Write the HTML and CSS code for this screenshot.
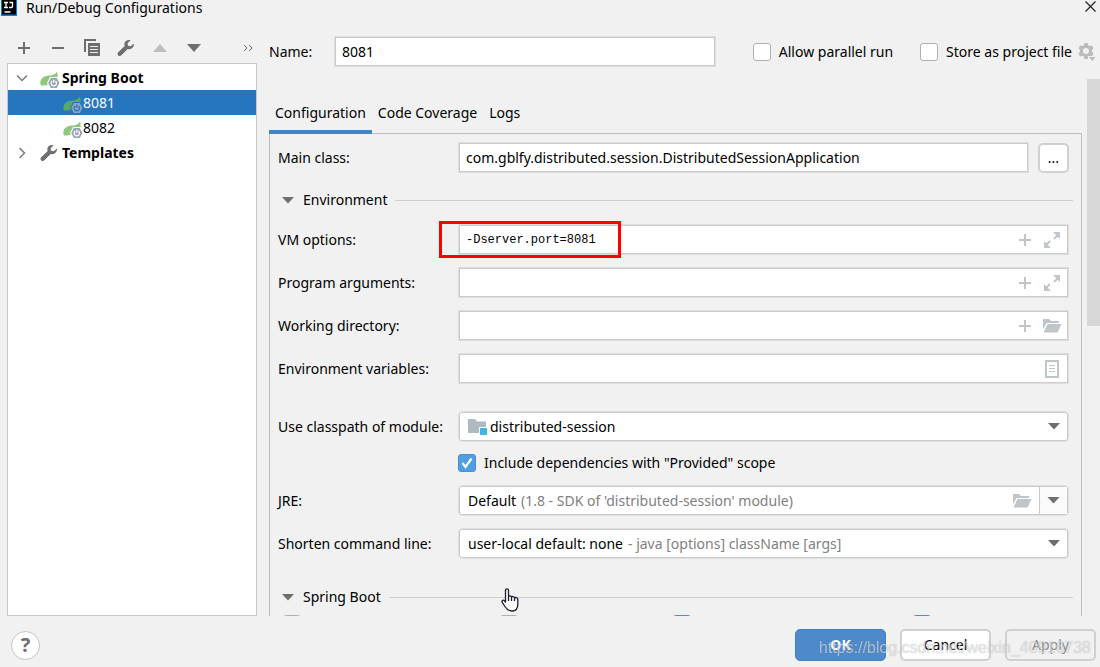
FILE: index.html
```html
<!DOCTYPE html>
<html lang="en">
<head>
    <meta charset="UTF-8">
    <meta name="viewport" content="width=device-width, initial-scale=1.0">
    <title>Run/Debug Configurations</title>
    <link rel="stylesheet" href="styles.css">
</head>
<body>
<!-- shared icons -->
<svg class="symbols" aria-hidden="true">
    <symbol id="wrench" viewBox="0 0 18 18">
        <path d="M17 4.6 13.7 7.2 11 6.7 10.6 4.2 13.6 1.2C11 .4 8.6 1.400 7.700 3.500 7.200 4.700 7.300 5.900 7.700 7L1.200 13.200C.3 14.100.3 15.500 1.200 16.400 2.100 17.300 3.500 17.200 4.400 16.300L10.700 9.900C13.800 11 17.400 8.500 17 4.600Z"/>
    </symbol>
    <symbol id="spring" viewBox="0 0 20 22">
        <path class="leaf" d="M17 4.500C18 8.500 18 12.500 15 14.500 11 17 6 19 1 18.500-.5 15.500.5 12 3.500 10 8 7.500 14 10 17 4.500Z"/>
        <path class="hex-edge" d="M10 10h7.500l3 6-3 6H10l-3-6Z"/>
        <path class="hex" d="M10.800 11h6l2.600 5-2.600 5h-6l-2.600-5Z"/>
        <path class="power" d="M12.200 14a2.700 2.700 0 1 0 3.200 0M13.800 12.700v3.300"/>
    </symbol>
    <symbol id="plus" viewBox="0 0 14 14">
        <path d="M6 1h2v5h5v2H8v5H6V8H1V6h5Z"/>
    </symbol>
    <symbol id="expand" viewBox="0 0 16 16">
        <path d="M9 0h7v7l-2.300-2.300-3 3-1.400-1.400 3-3ZM0 9l2.300 2.300 3-3 1.400 1.400-3 3L7 16H0Z"/>
    </symbol>
    <symbol id="folder" viewBox="0 0 20 15">
        <path d="M1 1h6l2 2h8v2H4.500L1 11.500ZM5.500 6H19.500L15.500 14.500H1.500Z"/>
    </symbol>
    <symbol id="down" viewBox="0 0 12 7">
        <path d="M0 0h12L6 6.500Z"/>
    </symbol>
</svg>

<div class="dialog">
    <header class="titlebar">
        <svg class="logo" width="16" height="16" viewBox="0 0 16 16">
            <path fill="#087cfa" d="M0 0h16v16H0Z"/>
            <path fill="#000" d="M1 0h14v14.500H1Z"/>
            <path fill="none" stroke="#fff" stroke-width="1.300" d="M3 2.500h4M5 2.500v5M3 7.500h4M8.500 2.500h3V6.500q0 1-1 1H8M3.500 12h6"/>
        </svg>
        <span class="title">Run/Debug Configurations</span>
        <button class="close" aria-label="Close">
            <svg width="11" height="11" viewBox="0 0 11 11"><path fill="none" stroke="#222" stroke-width="1.200" d="M.5.500l10 10M10.500.500l-10 10"/></svg>
        </button>
    </header>

    <div class="body">
        <aside class="sidebar">
            <div class="toolbar">
                <button aria-label="Add"><svg width="14" height="14"><use href="#plus"/></svg></button>
                <button aria-label="Remove"><svg width="14" height="14"><path d="M1 6h12v2H1Z"/></svg></button>
                <button aria-label="Copy">
                    <svg width="16" height="17" viewBox="0 0 16 17"><path fill-rule="evenodd" d="M0 0h12v2H2v11H0ZM4 4h12v13H4ZM6 7v1h8V7ZM6 10v1h8v-1ZM6 13v1h8v-1Z"/></svg>
                </button>
                <button aria-label="Edit templates"><svg width="18" height="18"><use href="#wrench"/></svg></button>
                <button aria-label="Move up" disabled><svg width="14" height="8"><path d="M0 8 7 0l7 8Z"/></svg></button>
                <button aria-label="Move down"><svg width="14" height="8"><path d="M0 0h14L7 8Z"/></svg></button>
                <button class="more" aria-label="More">
                    <svg width="10" height="8" viewBox="0 0 10 8"><path d="m1 1 3 3-3 3M6 1l3 3-3 3"/></svg>
                </button>
            </div>
            <ul class="tree">
                <li class="group">
                    <svg class="chevron" width="12" height="12" viewBox="0 0 12 12"><path d="m1 3.500 5 5 5-5"/></svg>
                    <svg class="spring" width="20" height="22"><use href="#spring"/></svg>
                    Spring Boot
                </li>
                <li class="leaf-row selected"><svg class="spring" width="20" height="22"><use href="#spring"/></svg>8081</li>
                <li class="leaf-row"><svg class="spring" width="20" height="22"><use href="#spring"/></svg>8082</li>
                <li class="group">
                    <svg class="chevron" width="12" height="12" viewBox="0 0 12 12"><path d="m3.500 1 5 5-5 5"/></svg>
                    <svg class="wrench" width="18" height="18"><use href="#wrench"/></svg>
                    Templates
                </li>
            </ul>
        </aside>

        <main class="main">
            <div class="name-row">
                <label class="name-label" for="name">Name:</label>
                <input class="field name" type="text" id="name" value="8081">
                <label class="check"><input type="checkbox">Allow parallel run</label>
                <label class="check"><input type="checkbox">Store as project file</label>
                <button class="gear" aria-label="Storage settings">
                    <svg width="18" height="18" viewBox="0 0 18 18">
                        <path fill-rule="evenodd" d="M6.300 0h3.400l.5 2.300 1.500.8 2.200-.7 1.700 2.900L14 7v2l1.600 1.600-1.700 2.900-2.200-.7-1.500.8-.5 2.300H6.300l-.5-2.300-1.500-.8-2.200.7-1.700-2.900L2 9V7L.4 5.300l1.700-2.900 2.200.7 1.500-.8ZM8 5a3 3 0 1 0 0 6 3 3 0 0 0 0-6Z"/>
                        <path stroke="#f1f1f1" d="M10 13.500h8.500L14.300 18.500Z"/>
                    </svg>
                </button>
            </div>

            <div class="content">
                <div class="pane">
                    <div class="tabs" role="tablist">
                        <button class="tab active" role="tab" aria-selected="true">Configuration</button>
                        <button class="tab" role="tab">Code Coverage</button>
                        <button class="tab" role="tab">Logs</button>
                    </div>
                    <form class="panel">
                        <div class="row">
                            <label for="main-class">Main class:</label>
                            <input class="field" type="text" id="main-class" value="com.gblfy.distributed.session.DistributedSessionApplication">
                            <button class="browse" type="button">...</button>
                        </div>

                        <div class="section">
                            <svg width="12" height="7"><use href="#down"/></svg>
                            <span>Environment</span>
                        </div>

                        <div class="row">
                            <label for="vm-options">VM options:</label>
                            <div class="field vm">
                                <input class="mono" type="text" id="vm-options" value="-Dserver.port=8081">
                                <button type="button" aria-label="Insert macro"><svg width="14" height="14"><use href="#plus"/></svg></button>
                                <button type="button" aria-label="Expand"><svg width="16" height="16"><use href="#expand"/></svg></button>
                            </div>
                        </div>
                        <div class="row">
                            <label for="program-args">Program arguments:</label>
                            <div class="field">
                                <input type="text" id="program-args">
                                <button type="button" aria-label="Insert macro"><svg width="14" height="14"><use href="#plus"/></svg></button>
                                <button type="button" aria-label="Expand"><svg width="16" height="16"><use href="#expand"/></svg></button>
                            </div>
                        </div>
                        <div class="row">
                            <label for="work-dir">Working directory:</label>
                            <div class="field">
                                <input type="text" id="work-dir">
                                <button type="button" aria-label="Insert macro"><svg width="14" height="14"><use href="#plus"/></svg></button>
                                <button type="button" aria-label="Browse"><svg width="20" height="15"><use href="#folder"/></svg></button>
                            </div>
                        </div>
                        <div class="row">
                            <label for="env-vars">Environment variables:</label>
                            <div class="field">
                                <input type="text" id="env-vars">
                                <button type="button" aria-label="Edit variables">
                                    <svg width="14" height="18" viewBox="0 0 14 18"><path fill-rule="evenodd" d="M0 0h14v18H0ZM2 2v14h10V2ZM4 5h6v1H4ZM4 8h6v1H4ZM4 11h6v1H4Z"/></svg>
                                </button>
                            </div>
                        </div>

                        <div class="row module-row">
                            <label for="module">Use classpath of module:</label>
                            <div class="field combo">
                                <svg class="module" width="20" height="18" viewBox="0 0 20 18">
                                    <path fill="#afb9c0" d="M0 1h7l2 2.500h9V9h-7v6H0Z"/>
                                    <path fill="#40b6e0" d="M12 10h7v7h-7Z"/>
                                </svg>
                                <select id="module"><option>distributed-session</option></select>
                                <svg class="arrow" width="12" height="7"><use href="#down"/></svg>
                            </div>
                        </div>
                        <div class="row check-row">
                            <label class="check"><input type="checkbox" checked>Include dependencies with "Provided" scope</label>
                        </div>
                        <div class="row">
                            <label for="jre">JRE:</label>
                            <div class="field combo split">
                                <select id="jre"><option>Default</option></select>
                                <span class="hint">(1.8 - SDK of 'distributed-session' module)</span>
                                <button type="button" aria-label="Browse"><svg width="20" height="15"><use href="#folder"/></svg></button>
                                <svg class="arrow" width="12" height="7"><use href="#down"/></svg>
                            </div>
                        </div>
                        <div class="row">
                            <label for="shorten">Shorten command line:</label>
                            <div class="field combo">
                                <select id="shorten"><option>user-local default: none</option></select>
                                <span class="hint">- java [options] className [args]</span>
                                <svg class="arrow" width="12" height="7"><use href="#down"/></svg>
                            </div>
                        </div>

                        <div class="section spring-section">
                            <svg width="12" height="7"><use href="#down"/></svg>
                            <span>Spring Boot</span>
                        </div>
                        <div class="flags">
                            <input type="checkbox" aria-label="Enable debug output">
                            <input type="checkbox" aria-label="Hide banner">
                            <input type="checkbox" aria-label="Enable launch optimization" checked>
                            <input type="checkbox" aria-label="Enable JMX agent" checked>
                        </div>
                    </form>
                </div>
                <div class="scrollbar"><div class="thumb"></div></div>
            </div>
        </main>
    </div>

    <footer class="footer">
        <button class="help" aria-label="Help">?</button>
        <button class="btn primary">OK</button>
        <button class="btn">Cancel</button>
        <button class="btn" disabled>Apply</button>
        <span class="watermark">https://blog.csdn.net/weixin_40916738</span>
    </footer>

    <svg class="cursor" width="18" height="24" viewBox="0 0 18 24">
        <path fill="#fff" stroke="#1c1c2c" stroke-width="1.300" stroke-linejoin="round" d="M4.500 14V2.500C4.500.3 7.500.3 7.500 2.500V9C7.500 7.500 10.300 7.500 10.500 9.300 11 8 13.500 8.300 13.500 10 14.500 9 16.800 9.500 16.800 11.500V16C16.800 20 15 23 11 23 7 23 5.500 21 4 18.500L1.500 14.800C.2 12.800 2 11.300 3.500 12.800ZM7.500 9v4M10.500 9.300V13M13.500 10v3"/>
    </svg>
</div>
</body>
</html>
```
FILE: styles.css
```css
* {
    box-sizing: border-box;
}
body {
    font-family: "Noto Sans", "Open Sans", sans-serif;
    font-size: 14px;
    line-height: 20px;
    margin: 0;
    color: #000;
    background-color: #f1f1f1;
}
button, input, select {
    font: inherit;
    color: inherit;
    margin: 0;
    padding: 0;
    border: none;
    background: none;
}
svg {
    flex: none;
}
.symbols {
    position: absolute;
    width: 0;
    height: 0;
}
.dialog {
    display: flex;
    flex-direction: column;
    height: 100vh;
    overflow: hidden;
    position: relative;
}

/* title */
.titlebar {
    display: flex;
    align-items: center;
    height: 16px;
    line-height: 16px;
    padding: 0 4px 0 1px;
}
.title {
    flex: 1;
    margin-left: 9px;
}
.close {
    display: flex;
    margin-bottom: 4px;
}

.body {
    flex: 1;
    display: flex;
    gap: 12px;
    min-height: 0;
    padding-left: 7px;
}

/* left side */
.sidebar {
    width: 250px;
    display: flex;
    flex-direction: column;
    padding-top: 16px;
}
.toolbar {
    display: flex;
    height: 31px;
}
.toolbar button {
    width: 34px;
    display: flex;
    align-items: center;
    justify-content: center;
    fill: #6e6e6e;
}
.toolbar button:disabled {
    fill: #bdbdbd;
}
.toolbar .more {
    width: 18px;
    margin-left: auto;
    fill: none;
    stroke: #6e6e6e;
}
.tree {
    flex: 1;
    list-style: none;
    margin: 0;
    padding: 1px 0 0;
    background: #fff;
    border: 1px solid #c9c9c9;
}
.tree li {
    display: flex;
    align-items: center;
    height: 25px;
}
.group {
    font-weight: bold;
    padding-left: 8px;
}
.group .chevron {
    margin-right: 12px;
    fill: none;
    stroke: #7a7a7a;
    stroke-width: 1.5;
}
.group .wrench {
    margin-right: 4px;
    fill: #6e6e6e;
}
.group .spring {
    margin-right: 2px;
}
.leaf-row {
    padding-left: 55px;
}
.selected {
    color: #fff;
    background: #2675bf;
}
.spring {
    --leaf: #8cc97b;
    --hex: #9aa7b0;
    --bg: #fff;
}
.selected .spring {
    --leaf: #57a869;
    --hex: #8ba5be;
    --bg: #2675bf;
}
.leaf {
    fill: var(--leaf);
}
.hex {
    fill: var(--hex);
}
.hex-edge {
    fill: var(--bg);
}
.power {
    fill: none;
    stroke: var(--bg);
    stroke-width: 1.2;
}

/* right side */
.main {
    flex: 1;
    min-width: 0;
    display: flex;
    flex-direction: column;
    padding-top: 20px;
}
.name-row {
    display: flex;
    align-items: center;
    padding-right: 4px;
}
.name-label {
    width: 65px;
}
.field {
    flex: 1;
    min-width: 0;
    height: 31px;
    padding: 0 7px;
    background: #fff;
    border: 1px solid #dedede;
    box-shadow: inset 0 0 0 1px #cbcbcb;
}
.name {
    margin-right: 10px;
}
.check {
    display: flex;
    align-items: center;
    gap: 8px;
}
.name-row .check {
    margin-left: 27px;
}
input[type="checkbox"] {
    appearance: none;
    flex: none;
    width: 18px;
    height: 18px;
    background: #fff;
    border: 1px solid #b0b0b0;
    border-radius: 3px;
}
input[type="checkbox"]:checked {
    background: #4f9ee3 url("data:image/svg+xml,%3Csvg xmlns='http://www.w3.org/2000/svg' viewBox='0 0 16 16'%3E%3Cpath fill='none' stroke='white' stroke-width='2.200' d='m3.500 8 3 4 6-8.500'/%3E%3C/svg%3E");
    border-color: #4a8fd0;
}
.gear {
    display: flex;
    margin-left: 6px;
    fill: #bbb;
}

.content {
    flex: 1;
    display: flex;
    gap: 5px;
    min-height: 0;
    margin-top: 12px;
}
.pane {
    flex: 1;
    min-width: 0;
    display: flex;
    flex-direction: column;
}
.tabs {
    display: flex;
    align-items: flex-end;
    height: 54px;
}
.tab {
    position: relative;
    padding: 7px 6px;
    margin-bottom: -1px;
    border-bottom: 4px solid transparent;
}
.tab.active {
    border-color: #4083c9;
}
.panel {
    flex: 1;
    min-height: 0;
    overflow: hidden;
    padding: 8px 12px 0 8px;
    border: 1px solid #bfbfbf;
    border-bottom: none;
}
.scrollbar {
    width: 13px;
}
.thumb {
    height: 46%;
    background: #d7d7d7;
}

.row {
    display: flex;
    align-items: center;
    margin-bottom: 12px;
}
.row > label:first-child:not(.check) {
    width: 180px;
}
.module-row {
    margin-top: 27px;
}
.check-row {
    height: 18px;
    margin-bottom: 13px;
    padding-left: 180px;
}
.browse {
    width: 31px;
    height: 30px;
    margin-left: 9px;
    background: #fff;
    border: 2px solid #d0d0d0;
    border-radius: 5px;
}
div.field {
    display: flex;
    align-items: center;
    padding-right: 2px;
}
.field input {
    flex: 1;
    min-width: 0;
}
.field button {
    width: 26px;
    display: flex;
    justify-content: center;
    margin-right: 1px;
    fill: #bfc5c9;
}
.field .mono {
    font-family: "Liberation Mono", monospace;
    font-size: 12px;
}
input:focus, select:focus {
    outline: none;
}
/* highlighted part of the vm options */
.vm {
    position: relative;
}
.vm::before {
    content: "";
    position: absolute;
    box-sizing: border-box;
    left: -20px;
    top: -4px;
    width: 182px;
    height: 37px;
    border: 3px solid #f00;
    pointer-events: none;
}
div.combo {
    padding-left: 9px;
    border-radius: 4px;
}
.combo select {
    appearance: none;
}
.combo .arrow {
    margin-left: auto;
    margin-right: 6px;
    fill: #6e6e6e;
}
.combo .module {
    margin-right: 2px;
}
.hint {
    color: #808080;
    margin-left: 4px;
}
.split button {
    margin-left: auto;
    margin-right: 4px;
}
.split .arrow {
    margin: 0 -1px 0 0;
    padding: 10px 7px;
    width: 28px;
    height: 27px;
    border-left: 1px solid #c9c9c9;
    background: #fafafa;
}

.section {
    display: flex;
    align-items: center;
    height: 26px;
    margin: 14px 0 11px;
    padding-left: 4px;
    fill: #6e6e6e;
}
.section span {
    margin-left: 9px;
}
.section::after {
    content: "";
    flex: 1;
    height: 1px;
    margin-left: 8px;
    margin-right: -4px;
    background: #d0d0d0;
}
.spring-section {
    margin: 25px 0 5px;
}
.flags {
    display: grid;
    grid-template-columns: 218fr 174fr 242fr 157fr;
    padding-left: 5px;
}

/* buttons */
.footer {
    display: flex;
    align-items: center;
    gap: 14px;
    height: 51px;
    padding: 7px 4px 0 11px;
    position: relative;
}
.help {
    width: 29px;
    height: 29px;
    margin-right: auto;
    font-size: 20px;
    font-weight: bold;
    color: #6e6e6e;
    background: #fff;
    border: 1px solid #c4c4c4;
    border-radius: 50%;
}
.btn {
    width: 91px;
    height: 32px;
    background: #fff;
    border: 2px solid #d0d0d0;
    border-radius: 5px;
}
.btn.primary {
    color: #fff;
    font-weight: bold;
    background: #4e8ac9;
    border: 1px solid #4481c0;
}
.btn:disabled {
    color: #8c8c8c;
    background: #f1f1f1;
}
.watermark {
    position: absolute;
    right: 9px;
    bottom: 9px;
    font-family: "Liberation Sans", sans-serif;
    font-size: 16px;
    color: rgba(255, 255, 255, 0.6);
    text-shadow: 0 0 1px rgba(0, 0, 0, 0.3);
    pointer-events: none;
}
.cursor {
    position: absolute;
    left: 501px;
    top: 588px;
    pointer-events: none;
}
```
